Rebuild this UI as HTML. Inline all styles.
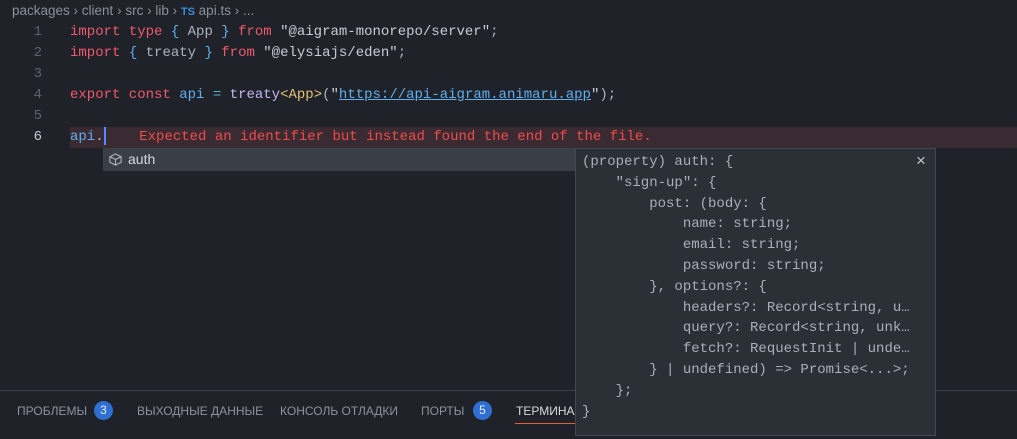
<!DOCTYPE html>
<html><head><meta charset="utf-8"><style>
*{margin:0;padding:0;box-sizing:border-box}
body{width:1017px;height:439px;background:#1f2228;overflow:hidden;position:relative;font-family:"Liberation Mono",monospace;font-size:14px;color:#abb2bf}
.bc{position:absolute;left:12px;top:3px;font-family:"Liberation Sans",sans-serif;font-size:13.5px;color:#8b9199;white-space:pre}
.ln{position:absolute;left:0;width:42px;text-align:right;color:#5c626c;height:21px;line-height:21px}
.cl{position:absolute;left:70px;white-space:pre;height:21px;line-height:21px}
.k{color:#ef596f}.b{color:#61afef}.s{color:#c8ccd4}.c{color:#56b6c2}.f{color:#c5b4f5}.y{color:#e5c07b}
.err{position:absolute;left:70px;right:0;top:127px;height:21px;background:#3a2a31}
.sug{position:absolute;left:103px;top:148px;width:472px;height:23px;background:#2a2e35;border:1px solid #3c4048}
.sug .sel{position:absolute;left:0;top:0;right:0;height:21px;background:#3a3f47;color:#d5d9e0;line-height:21px;padding-left:24px}
.hov{position:absolute;z-index:5;left:575px;top:148px;width:361px;height:288px;background:#2b2f36;border:1px solid #434851;white-space:pre;color:#a9b0ba;padding:3px 0 0 6px;line-height:20.8px}
.panel{position:absolute;left:0;right:0;top:390px;bottom:0;border-top:1px solid #383c44;background:#1f2228;font-family:"Liberation Sans",sans-serif;font-size:12px;color:#8d929a}
.t{position:absolute;top:13px}
.bd{display:inline-block;width:19px;height:19px;border-radius:50%;background:#2f6fd3;color:#e8eef8;text-align:center;line-height:19px;font-size:12px;position:absolute;top:-3px}
</style></head><body>
<div class="bc">packages <span>›</span> client <span>›</span> src <span>›</span> lib <span>›</span> <b style="color:#3b8fd9;font-size:11px">TS</b> api.ts <span>›</span> ...</div>
<div class="err"></div>
<div class="ln" style="top:22px">1</div><div class="ln" style="top:43px">2</div><div class="ln" style="top:64px">3</div><div class="ln" style="top:85px">4</div><div class="ln" style="top:106px">5</div><div class="ln" style="top:127px;color:#c8ccd4">6</div>
<div class="cl" style="top:22px"><span class="k">import type</span> <span class="b">{</span> App <span class="b">}</span> <span class="k">from</span> <span class="s">"@aigram-monorepo/server"</span>;</div>
<div class="cl" style="top:43px"><span class="k">import</span> <span class="b">{</span> treaty <span class="b">}</span> <span class="k">from</span> <span class="s">"@elysiajs/eden"</span>;</div>
<div class="cl" style="top:85px"><span class="k">export const</span> <span class="b">api</span> <span class="c">=</span> <span class="f">treaty</span><span class="y">&lt;App&gt;</span>(<span class="s">"</span><span class="b" style="text-decoration:underline">https://api-aigram.animaru.app</span><span class="s">"</span>);</div>
<div class="cl" style="top:127px"><span class="b">api</span>.<span style="display:inline-block;width:2px;height:18px;background:#528bff;vertical-align:middle"></span>    <span style="color:#f14c4c">Expected an identifier but instead found the end of the file.</span></div>
<div class="sug"><div class="sel"><svg style="position:absolute;left:4px;top:3px" width="15" height="15" viewBox="0 0 16 16" fill="none" stroke="#aab0b8" stroke-width="1.2"><path d="M8 2 L14 5 L14 11 L8 14 L2 11 L2 5 Z M2 5 L8 8 L14 5 M8 8 L8 14"/></svg><span style="font-family:'Liberation Sans',sans-serif;font-size:14px">auth</span></div></div>
<div class="panel">
<span class="t" style="left:17px">ПРОБЛЕМЫ</span><span class="bd" style="left:94px;top:10px">3</span>
<span class="t" style="left:137px">ВЫХОДНЫЕ ДАННЫЕ</span>
<span class="t" style="left:280px">КОНСОЛЬ ОТЛАДКИ</span>
<span class="t" style="left:421px">ПОРТЫ</span><span class="bd" style="left:473px;top:10px">5</span>
<span class="t" style="left:516px;color:#d6dae0">ТЕРМИНАЛ</span><div style="position:absolute;left:515px;top:32px;width:60px;height:1px;background:#e0603a"></div>
</div>
<div class="hov">(property) auth: {
    "sign-up": {
        post: (body: {
            name: string;
            email: string;
            password: string;
        }, options?: {
            headers?: Record&lt;string, u…
            query?: Record&lt;string, unk…
            fetch?: RequestInit | unde…
        } | undefined) =&gt; Promise&lt;...&gt;;
    };
}<span style="position:absolute;left:340px;top:2px;font-family:'Liberation Sans',sans-serif;font-size:17px;color:#c0c5cc">×</span></div>
</body></html>
